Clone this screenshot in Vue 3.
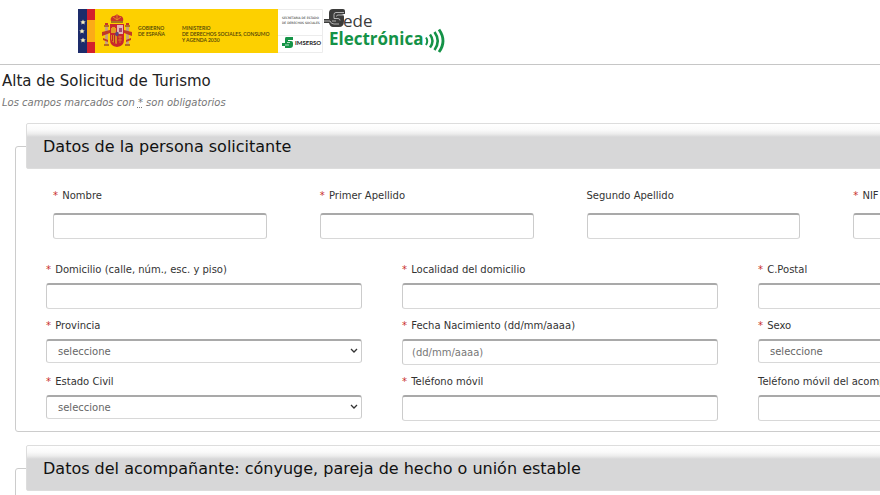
<script setup>
import { ref } from 'vue'

const nameFields = ref([
  { id: 'nombre', label: 'Nombre', required: true, value: '' },
  { id: 'apellido1', label: 'Primer Apellido', required: true, value: '' },
  { id: 'apellido2', label: 'Segundo Apellido', required: false, value: '' },
  { id: 'nif', label: 'NIF', required: true, value: '' },
])

const detailFields = ref([
  { id: 'domicilio', label: 'Domicilio (calle, núm., esc. y piso)', required: true, value: '' },
  { id: 'localidad', label: 'Localidad del domicilio', required: true, value: '' },
  { id: 'cpostal', label: 'C.Postal', required: true, value: '' },
  { id: 'provincia', label: 'Provincia', required: true, type: 'select', value: '' },
  { id: 'fnac', label: 'Fecha Nacimiento (dd/mm/aaaa)', required: true, placeholder: '(dd/mm/aaaa)', value: '' },
  { id: 'sexo', label: 'Sexo', required: true, type: 'select', value: '' },
  { id: 'ecivil', label: 'Estado Civil', required: true, type: 'select', value: '' },
  { id: 'movil', label: 'Teléfono móvil', required: true, value: '' },
  { id: 'movil2', label: 'Teléfono móvil del acompañante', required: false, value: '' },
])
</script>

<template>
  <div class="page">
    <header class="header">
      <svg class="logo" width="370" height="48" viewBox="78 7 370 48" role="img" aria-label="Sede Electrónica del Imserso">
        <!-- flags -->
        <rect x="78" y="9" width="200" height="44" fill="#fdd000" />
        <rect x="78" y="9" width="9" height="44" fill="#1d2c6b" />
        <rect x="87" y="9" width="8" height="11" fill="#d3202c" />
        <rect x="87" y="20" width="8" height="22" fill="#fbab18" />
        <rect x="87" y="42" width="8" height="11" fill="#d3202c" />
        <g fill="#f6efc0">
          <path d="M83 19.500l.8 1.700 1.900.2-1.400 1.300.4 1.900-1.700-1-1.700 1 .4-1.900-1.400-1.300 1.900-.2z" />
          <path d="M82 28.500l.8 1.700 1.900.2-1.400 1.300.4 1.900-1.700-1-1.700 1 .4-1.900-1.400-1.300 1.900-.2z" />
          <path d="M83 37.500l.8 1.700 1.900.2-1.400 1.300.4 1.900-1.700-1-1.700 1 .4-1.900-1.400-1.300 1.900-.2z" />
        </g>
        <!-- coat of arms -->
        <g>
          <path d="M111 21c-1-3 1-5 3-5l2-1 1-1 1 1 2 1c2 0 4 2 3 5z" fill="#c8322b" />
          <path d="M111 21h12v2h-12z" fill="#a8741c" />
          <path d="M113 17l4 3 4-3M117 14v6" fill="none" stroke="#e9a520" stroke-width=".8" />
          <path d="M105 27h3v17h-3zM126 27h3v17h-3z" fill="#c9a478" />
          <path d="M104 25h5v2h-5zM125 25h5v2h-5zM104 44h5v2h-5zM125 44h5v2h-5z" fill="#b8701a" />
          <path d="M105 23h3v2h-3zM126 23h3v2h-3z" fill="#c8322b" />
          <path d="M102 32l8-2v3l-8 3zM132 32l-8-2v3l8 3zM103 38l5 2v2l-5-2zM131 38l-5 2v2l5-2z" fill="#c23a26" />
          <path d="M110 24h14v16q0 6-7 7-7-1-7-7z" fill="#c9272c" />
          <path d="M117 25h6v9h-6z" fill="#e5b3b4" />
          <path d="M119 28h3v4h-3z" fill="#a34a72" />
          <path d="M112 27h3v1h1v5h-5v-5h1z" fill="#e39a20" />
          <path d="M111 35h6v9q-5-1-6-5z" fill="#d98c1c" />
          <path d="M112.500 35v6M114.500 35v8" stroke="#bd2029" stroke-width="1" />
          <path d="M118 37h4M118 40h4M120 36v7" stroke="#dc8c22" stroke-width=".7" />
          <ellipse cx="117" cy="34" rx="1.800" ry="2.200" fill="#604378" />
        </g>
        <g class="gov" fill="#4b3d08">
          <text x="138" y="30">GOBIERNO</text>
          <text x="138" y="36">DE ESPAÑA</text>
          <text x="182" y="30">MINISTERIO</text>
          <text x="182" y="36">DE DERECHOS SOCIALES, CONSUMO</text>
          <text x="182" y="42">Y AGENDA 2030</text>
        </g>
        <!-- Imserso -->
        <path d="M278 9.500h44.500v43H278M278 35.500h44" fill="none" stroke="#ececec" />
        <g class="secretary" fill="#222">
          <text x="282" y="19">SECRETARÍA DE ESTADO</text>
          <text x="282" y="24">DE DERECHOS SOCIALES</text>
        </g>
        <path d="M286 37h7v3h-5v1h3q2 0 2 2v2q0 3-3 3h-5v-2h-3v-3h3v-4q0-2 1-2z" fill="#159447" />
        <path d="M287 42.500h3M285 45h4" fill="none" stroke="#fff" stroke-width=".7" />
        <text class="imserso" x="295" y="45" fill="#222">IMSERSO</text>
        <!-- Sede Electrónica -->
        <g fill="#3c3c3b">
          <path d="M333 9h10q2 0 2 2v3h-4q3 0 3 3v4q0 6-5 6h-6q-3 0-4-4h-5v-4h5v-6q0-4 4-4z" />
        </g>
        <path d="M344 12.500h-8q-2 0-2 2v4h4q2 0 2 2M344 15h-6q-1.500 0-1.500 1.500M324 21h6q1 3 4 3h5M332 21h4" fill="none" stroke="#d0d0d0" stroke-width=".8" />
        <text class="sede" x="343" y="27" fill="#3c3c3b">ede</text>
        <text class="electronica" x="329" y="45" fill="#149247">Electrónica</text>
        <g fill="none" stroke="#149247">
          <path d="M426 37.500q2.500 3.500 0 7.500" stroke-width="2" />
          <path d="M430 34.500q5 6.500 0 13" stroke-width="2.500" />
          <path d="M434.500 32q6.500 9 0 18" stroke-width="2.600" />
          <path d="M439 29.500q8 11.500 0 22.500" stroke-width="2.800" />
        </g>
      </svg>
    </header>

    <main>
      <h1>Alta de Solicitud de Turismo</h1>
      <p class="hint">Los campos marcados con <abbr title="obligatorio">*</abbr> son obligatorios</p>

      <form class="form" @submit.prevent>
        <fieldset>
          <legend>Datos de la persona solicitante</legend>
          <div class="names">
            <div v-for="field in nameFields" :key="field.id" class="field">
              <label :for="field.id"><span v-if="field.required" class="req">* </span>{{ field.label }}</label>
              <input :id="field.id" v-model="field.value" type="text">
            </div>
          </div>
          <div class="details">
            <div v-for="field in detailFields" :key="field.id" class="field">
              <label :for="field.id"><span v-if="field.required" class="req">* </span>{{ field.label }}</label>
              <div v-if="field.type === 'select'" class="select">
                <select :id="field.id" v-model="field.value">
                  <option value="">seleccione</option>
                </select>
                <svg class="arrow" width="8" height="6" viewBox="0 0 8 6" aria-hidden="true">
                  <path d="M1 1l3 3 3-3" fill="none" stroke="#333" stroke-width="1.300" />
                </svg>
              </div>
              <input v-else :id="field.id" v-model="field.value" type="text" :placeholder="field.placeholder">
            </div>
          </div>
        </fieldset>

        <fieldset>
          <legend>Datos del acompañante: cónyuge, pareja de hecho o unión estable</legend>
        </fieldset>
      </form>
    </main>
  </div>
</template>

<style>
body {
  overflow: hidden;
  background: #fff;
}
</style>

<style scoped>
.page {
  overflow: hidden;
  font-family: Verdana, "DejaVu Sans", sans-serif;
  font-size: 10px;
  color: #333;
}

.header {
  padding: 7px 0 9px 78px;
  border-bottom: 1px solid #c6c6c6;
}

.logo {
  display: block;
}

.gov {
  font: 600 5px Lato, sans-serif;
}

.secretary {
  font: 3px "DejaVu Sans", sans-serif;
}

.imserso {
  font: bold 6px Lato, sans-serif;
}

.sede {
  font: 17px "Open Sans", sans-serif;
}

.electronica {
  font: bold 17px "Open Sans", sans-serif;
}

h1 {
  margin: 0;
  padding: 6px 2px 0;
  font-size: 15px;
  font-weight: normal;
  line-height: 20px;
  color: #222;
}

.hint {
  margin: 0 0 12px;
  padding: 4px 2px 0;
  font-style: italic;
  line-height: 16px;
  color: #777;
}

/* the form is wider than the window and runs off its right edge */
.form {
  width: calc(100% + 240px);
}

fieldset {
  min-width: 0;
  margin: 0 15px 13px;
  padding: 0 10px 10px;
  border: 1px solid #ccc;
  border-radius: 3px;
}

legend {
  box-sizing: border-box;
  width: 100%;
  padding: 11px 16px 9px;
  border: 1px solid #ddd;
  border-radius: 2px;
  background: linear-gradient(#fff, #fafafa 6px, #ececec 10px, #d7d7d8 13px, #d7d7d8);
  font-size: 16px;
  line-height: 24px;
  color: #111;
}

.names {
  display: grid;
  grid-template-columns: repeat(4, 1fr);
  gap: 53px;
  padding: 19px 27px 23px;
}

.names .field {
  gap: 9px;
}

.details {
  display: grid;
  grid-template-columns: repeat(3, 1fr);
  gap: 9px 40px;
  padding: 0 20px;
}

.field {
  display: flex;
  flex-direction: column;
  gap: 5px;
  min-width: 0;
}

label {
  line-height: 16px;
  white-space: nowrap;
}

.req {
  margin-right: 1px;
  color: #c9302c;
}

input,
select {
  box-sizing: border-box;
  width: 100%;
  height: 26px;
  margin: 0;
  padding: 0 9px;
  border: 1px solid #ccc;
  border-top: 2px solid #a9a9a9;
  border-bottom-color: #d8d8d8;
  border-radius: 3px;
  background: #fff;
  font: inherit;
  color: #666;
}

select {
  display: block;
  height: 24px;
  padding: 0 11px;
  appearance: none;
}

input::placeholder {
  color: #777;
}

.select {
  position: relative;
}

.arrow {
  position: absolute;
  top: 9px;
  right: 4px;
  pointer-events: none;
}
</style>
